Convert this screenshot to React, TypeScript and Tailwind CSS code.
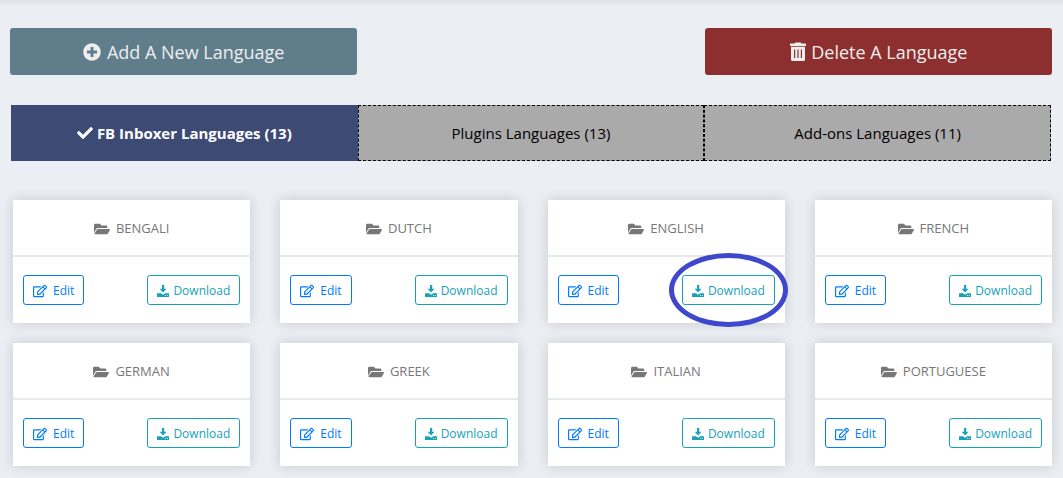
import { FaCheck, FaFolderOpen, FaPlusCircle, FaRegEdit } from "react-icons/fa";

const languages = ["Bengali", "Dutch", "English", "French", "German", "Greek", "Italian", "Portuguese"];

function TrashIcon() {
  return (
    <svg viewBox="0 0 18 20" className="h-5 w-[18px]" fill="currentColor" aria-hidden="true">
      <path
        fillRule="evenodd"
        d="M6.500 0.500h5l1 1H17v2.500H1V1.500h4.500zM2 4.700h14v12.800a1.500 1.500 0 0 1-1.500 1.500h-11A1.500 1.500 0 0 1 2 17.500zM5 7.500v8.500h1.200V7.500zM8.400 7.500v8.500h1.200V7.500zM11.800 7.500v8.500H13V7.500z"
      />
    </svg>
  );
}

function DownloadIcon() {
  return (
    <svg viewBox="0 0 12 12" className="size-3" fill="currentColor" aria-hidden="true">
      <path d="M5 0h2.200v3.800h2.300L6.100 7.600 2.600 3.800H5z" />
      <path
        fillRule="evenodd"
        d="M0.400 8.200h3.500l2.200 1.500 2.200-1.500h3.300q.4 0 .4.400v2.900q0 .5-.5.500h-11Q0 12 0 11.500V8.600q0-.4.4-.4zM8.200 10.100v.8H9v-.8zM9.900 10.100v.8h.8v-.8z"
      />
    </svg>
  );
}

function LanguageCard({ name, highlighted }: { name: string; highlighted: boolean }) {
  return (
    <article className="bg-white shadow-[0_0_12px_rgba(0,0,0,0.16)]">
      <h2 className="flex h-[55px] items-center justify-center gap-1.5 pt-0.5 text-[13px] text-[#777] uppercase">
        <FaFolderOpen size={16} aria-hidden="true" />
        {name}
      </h2>
      <div className="flex items-center justify-between border-t-2 border-[#e9e9e9] px-2.5 py-[18px]">
        <button
          type="button"
          className="flex h-[30px] items-center gap-1.5 rounded-[3px] border border-[#007bff] px-[9px] pt-0.5 text-xs text-[#007bff]"
        >
          <FaRegEdit size={14} aria-hidden="true" />
          Edit
        </button>
        <div className="relative">
          <button
            type="button"
            className="flex h-[30px] items-center gap-1 rounded-[3px] border border-[#17a2b8] px-[9px] pt-0.5 text-xs text-[#17a2b8]"
          >
            <DownloadIcon />
            Download
          </button>
          {highlighted && (
            <div className="pointer-events-none absolute -inset-x-[13px] -inset-y-[22px] rounded-[50%] border-[5px] border-[#3f48cc]" />
          )}
        </div>
      </div>
    </article>
  );
}

export default function App() {
  return (
    <main className="min-h-screen bg-[#ebeff4] bg-linear-to-b from-[#dcdfe4] to-[#ebeff4] to-[6px] pt-7 pr-[11px] pb-3 pl-2.5 font-['Open_Sans','Noto_Sans',sans-serif]">
      <div className="flex justify-between">
        <button
          type="button"
          className="flex h-[47px] w-1/3 items-center justify-center gap-1.5 rounded-[3px] bg-[#607d8b] text-lg text-[#eee]"
        >
          <FaPlusCircle size={18} aria-hidden="true" />
          Add A New Language
        </button>
        <button
          type="button"
          className="flex h-[47px] w-1/3 items-center justify-center gap-1 rounded-[3px] bg-[#8d2f2f] text-lg text-[#eee]"
        >
          <TrashIcon />
          Delete A Language
        </button>
      </div>

      <div className="mt-[30px] grid grid-cols-3 px-px text-[15px]" role="tablist">
        <button
          type="button"
          role="tab"
          aria-selected="true"
          className="flex h-14 items-center justify-center gap-1 bg-[#3d4a73] font-bold text-white"
        >
          <FaCheck size={16} aria-hidden="true" />
          FB Inboxer Languages (13)
        </button>
        <button type="button" role="tab" aria-selected="false" className="h-14 border border-dashed border-black bg-[#aaa] text-black">
          Plugins Languages (13)
        </button>
        <button type="button" role="tab" aria-selected="false" className="h-14 border border-dashed border-black bg-[#aaa] text-black">
          Add-ons Languages (11)
        </button>
      </div>

      <div className="mt-[39px] grid grid-cols-4 gap-x-[30px] gap-y-5 pl-[3px]">
        {languages.map((name) => (
          <LanguageCard key={name} name={name} highlighted={name === "English"} />
        ))}
      </div>
    </main>
  );
}
